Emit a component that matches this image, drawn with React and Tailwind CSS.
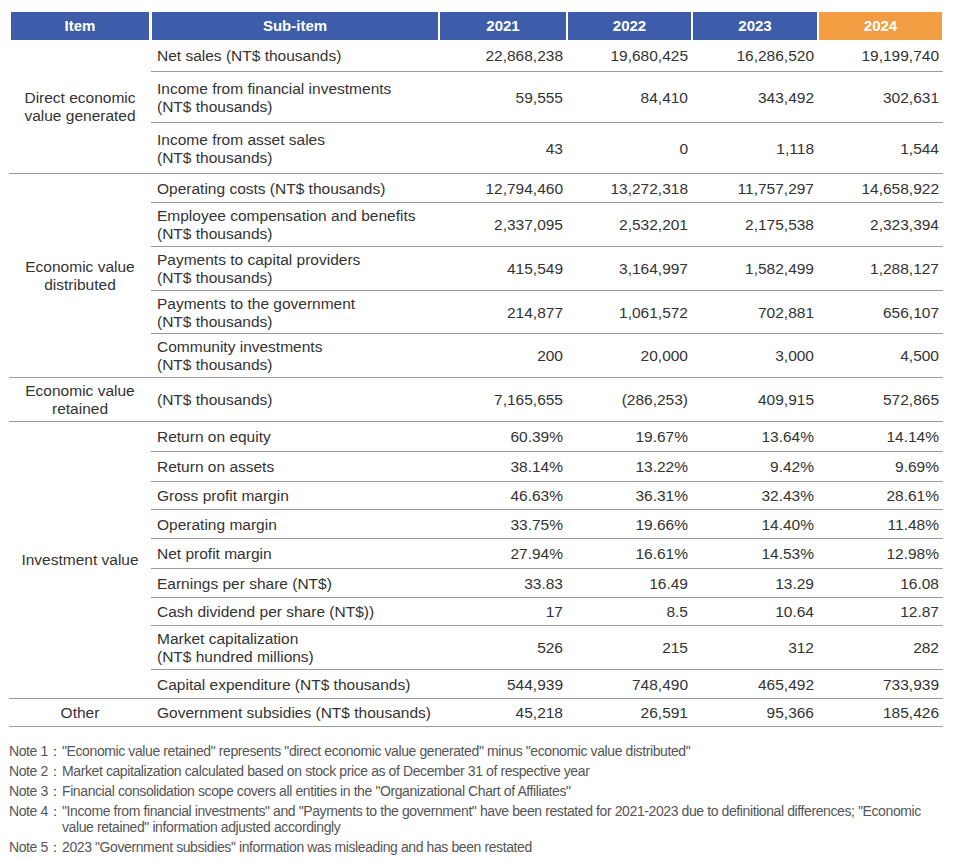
import React from 'react';

const groups = [
  {
    item: ['Direct economic', 'value generated'],
    rows: [
      { label: ['Net sales (NT$ thousands)'], h: 'h-[32px]', vals: ['22,868,238', '19,680,425', '16,286,520', '19,199,740'] },
      { label: ['Income from financial investments', '(NT$ thousands)'], h: 'h-[51px]', vals: ['59,555', '84,410', '343,492', '302,631'] },
      { label: ['Income from asset sales', '(NT$ thousands)'], h: 'h-[51px]', vals: ['43', '0', '1,118', '1,544'] },
    ],
  },
  {
    item: ['Economic value', 'distributed'],
    rows: [
      { label: ['Operating costs (NT$ thousands)'], h: 'h-[29px]', vals: ['12,794,460', '13,272,318', '11,757,297', '14,658,922'] },
      { label: ['Employee compensation and benefits', '(NT$ thousands)'], h: 'h-[44px]', vals: ['2,337,095', '2,532,201', '2,175,538', '2,323,394'] },
      { label: ['Payments to capital providers', '(NT$ thousands)'], h: 'h-[44px]', vals: ['415,549', '3,164,997', '1,582,499', '1,288,127'] },
      { label: ['Payments to the government', '(NT$ thousands)'], h: 'h-[43px]', vals: ['214,877', '1,061,572', '702,881', '656,107'] },
      { label: ['Community investments', '(NT$ thousands)'], h: 'h-[44px]', vals: ['200', '20,000', '3,000', '4,500'] },
    ],
  },
  {
    item: ['Economic value', 'retained'],
    rows: [
      { label: ['(NT$ thousands)'], h: 'h-[44px]', vals: ['7,165,655', '(286,253)', '409,915', '572,865'] },
    ],
  },
  {
    item: ['Investment value'],
    rows: [
      { label: ['Return on equity'], h: 'h-[30px]', vals: ['60.39%', '19.67%', '13.64%', '14.14%'] },
      { label: ['Return on assets'], h: 'h-[30px]', vals: ['38.14%', '13.22%', '9.42%', '9.69%'] },
      { label: ['Gross profit margin'], h: 'h-[28px]', vals: ['46.63%', '36.31%', '32.43%', '28.61%'] },
      { label: ['Operating margin'], h: 'h-[29px]', vals: ['33.75%', '19.66%', '14.40%', '11.48%'] },
      { label: ['Net profit margin'], h: 'h-[30px]', vals: ['27.94%', '16.61%', '14.53%', '12.98%'] },
      { label: ['Earnings per share (NT$)'], h: 'h-[29px]', vals: ['33.83', '16.49', '13.29', '16.08'] },
      { label: ['Cash dividend per share (NT$))'], h: 'h-[28px]', vals: ['17', '8.5', '10.64', '12.87'] },
      { label: ['Market capitalization', '(NT$ hundred millions)'], h: 'h-[44px]', vals: ['526', '215', '312', '282'] },
      { label: ['Capital expenditure (NT$ thousands)'], h: 'h-[29px]', vals: ['544,939', '748,490', '465,492', '733,939'] },
    ],
  },
  {
    item: ['Other'],
    rows: [
      { label: ['Government subsidies (NT$ thousands)'], h: 'h-[28px]', vals: ['45,218', '26,591', '95,366', '185,426'] },
    ],
  },
];

const valWidths = ['w-[128px]', 'w-[125px]', 'w-[126px]', 'w-[125px]'];

const notes = [
  ['Note 1', '"Economic value retained" represents "direct economic value generated" minus "economic value distributed"'],
  ['Note 2', 'Market capitalization calculated based on stock price as of December 31 of respective year'],
  ['Note 3', 'Financial consolidation scope covers all entities in the "Organizational Chart of Affiliates"'],
  ['Note 4', '"Income from financial investments" and "Payments to the government" have been restated for 2021-2023 due to definitional differences; "Economic value retained" information adjusted accordingly'],
  ['Note 5', '2023 "Government subsidies" information was misleading and has been restated'],
];

const HeadCell = ({ w, bg, children }) => (
  <div className={`${w} px-[1px] h-full`}>
    <div className={`${bg} h-full flex items-center justify-center text-white font-bold text-[15px]`}>{children}</div>
  </div>
);

export default function App() {
  return (
    <div className="bg-white min-h-[861px] w-[955px] text-[#333] font-['Liberation_Sans',Arial,sans-serif]">
      <div className="ml-[9px] pt-[12px] w-[934px]">
        <div className="flex h-[28px]">
          <div className="w-[142px] px-[2px] h-full">
            <div className="bg-[#3d5dab] h-full flex items-center justify-center text-white font-bold text-[15px]">Item</div>
          </div>
          <HeadCell w="w-[288px]" bg="bg-[#3d5dab]">Sub-item</HeadCell>
          <HeadCell w="w-[128px]" bg="bg-[#3d5dab]">2021</HeadCell>
          <HeadCell w="w-[125px]" bg="bg-[#3d5dab]">2022</HeadCell>
          <HeadCell w="w-[126px]" bg="bg-[#3d5dab]">2023</HeadCell>
          <HeadCell w="w-[125px]" bg="bg-[#f39d42]">2024</HeadCell>
        </div>

        {groups.map((g, gi) => (
          <div key={gi} className="flex">
            <div className="w-[142px] border-b border-[#9a9a9a] flex flex-col items-center justify-center text-center text-[15.5px] leading-[18px]">
              {g.item.map((t, i) => (
                <span key={i}>{t}</span>
              ))}
            </div>
            <div className="flex-1">
              {g.rows.map((r, ri) => (
                <div key={ri} className={`flex ${r.h} border-b border-[#9a9a9a] text-[15.5px] leading-[18px] pt-[1px]`}>
                  <div className="w-[288px] pl-[6px] flex flex-col justify-center whitespace-nowrap">
                    {r.label.map((t, i) => (
                      <span key={i}>{t}</span>
                    ))}
                  </div>
                  {r.vals.map((v, vi) => (
                    <div key={vi} className={`${valWidths[vi]} pr-[4px] flex items-center justify-end`}>
                      {v}
                    </div>
                  ))}
                </div>
              ))}
            </div>
          </div>
        ))}

        <div className="mt-[16px] flex flex-col gap-[4px] text-[14px] leading-[16px] text-[#555] tracking-[-0.4px]">
          {notes.map(([n, t]) => (
            <div key={n} className="flex">
              <span className="w-[53px] shrink-0">{n}：</span>
              <span>{t}</span>
            </div>
          ))}
        </div>
      </div>
    </div>
  );
}
